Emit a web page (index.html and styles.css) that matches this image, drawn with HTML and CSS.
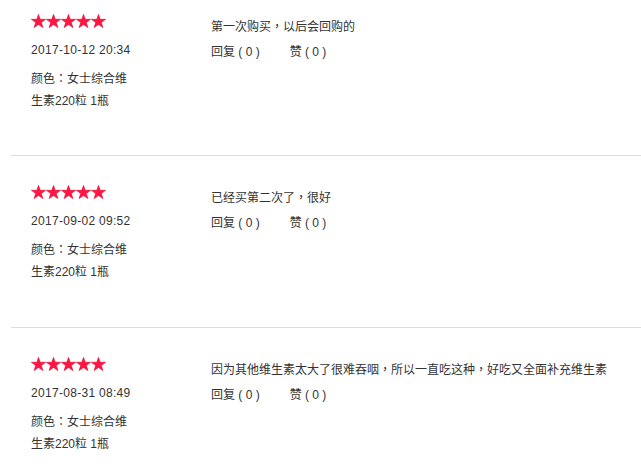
FILE: index.html
```html
<!DOCTYPE html>
<html lang="zh-CN">
<head>
<meta charset="utf-8">
<title>评价</title>
<link rel="stylesheet" href="styles.css">
</head>
<body>
<svg class="defs" width="0" height="0" aria-hidden="true">
  <defs>
    <symbol id="star" viewBox="0 0 15 14">
      <polygon points="7.5,0.4 9.2,5.3 14.6,5.3 10.3,8.5 11.9,13.6 7.5,10.5 3.1,13.6 4.7,8.5 0.4,5.3 5.8,5.3" fill="#ff1744" stroke="#e8002c" stroke-width="0.6" stroke-linejoin="round"/>
    </symbol>
  </defs>
</svg>
<div class="list">
  <div class="review">
    <div class="meta">
      <div class="stars">
        <svg class="star"><use href="#star"/></svg><svg class="star"><use href="#star"/></svg><svg class="star"><use href="#star"/></svg><svg class="star"><use href="#star"/></svg><svg class="star"><use href="#star"/></svg>
      </div>
      <div class="date">2017-10-12 20:34</div>
      <div class="spec">颜色<span class="punct" lang="zh-TW">：</span>女士综合维<br>生素220粒 1瓶</div>
    </div>
    <div class="body">
      <div class="text">第一次购买<span class="punct" lang="zh-TW">，</span>以后会回购的</div>
      <div class="actions"><span class="reply">回复 ( 0 )</span><span class="like">赞 ( 0 )</span></div>
    </div>
  </div>
  <div class="review">
    <div class="meta">
      <div class="stars">
        <svg class="star"><use href="#star"/></svg><svg class="star"><use href="#star"/></svg><svg class="star"><use href="#star"/></svg><svg class="star"><use href="#star"/></svg><svg class="star"><use href="#star"/></svg>
      </div>
      <div class="date">2017-09-02 09:52</div>
      <div class="spec">颜色<span class="punct" lang="zh-TW">：</span>女士综合维<br>生素220粒 1瓶</div>
    </div>
    <div class="body">
      <div class="text">已经买第二次了<span class="punct" lang="zh-TW">，</span>很好</div>
      <div class="actions"><span class="reply">回复 ( 0 )</span><span class="like">赞 ( 0 )</span></div>
    </div>
  </div>
  <div class="review">
    <div class="meta">
      <div class="stars">
        <svg class="star"><use href="#star"/></svg><svg class="star"><use href="#star"/></svg><svg class="star"><use href="#star"/></svg><svg class="star"><use href="#star"/></svg><svg class="star"><use href="#star"/></svg>
      </div>
      <div class="date">2017-08-31 08:49</div>
      <div class="spec">颜色<span class="punct" lang="zh-TW">：</span>女士综合维<br>生素220粒 1瓶</div>
    </div>
    <div class="body">
      <div class="text">因为其他维生素太大了很难吞咽<span class="punct" lang="zh-TW">，</span>所以一直吃这种<span class="punct" lang="zh-TW">，</span>好吃又全面补充维生素</div>
      <div class="actions"><span class="reply">回复 ( 0 )</span><span class="like">赞 ( 0 )</span></div>
    </div>
  </div>
</div>
</body>
</html>
```

FILE: styles.css
```css
html, body {
  margin: 0;
  padding: 0;
  background: #fff;
}
body {
  font-family: "Liberation Sans", "Noto Sans CJK SC", sans-serif;
  font-size: 12px;
  color: #333;
  overflow: hidden;
}
.defs {
  position: absolute;
  width: 0;
  height: 0;
}
.punct {
  font-family: "Noto Sans CJK TC", "Noto Sans CJK SC", sans-serif;
}
.list {
  margin-left: 11px;
}
.review {
  display: flex;
  padding: 29px 0 44px 20px;
  border-bottom: 1px solid #dcdcdc;
}
.review:first-child {
  padding-top: 14px;
  padding-bottom: 43px;
}
.meta {
  width: 180px;
  flex: none;
}
.stars {
  display: flex;
  height: 14px;
}
.star {
  width: 15px;
  height: 14px;
  display: block;
}
.date {
  margin-top: 12px;
  line-height: 21px;
  letter-spacing: 0.3px;
}
.spec {
  margin-top: 6px;
  line-height: 22px;
}
.body {
  flex: 1;
  padding-top: 1px;
}
.text {
  line-height: 22px;
}
.actions {
  margin-top: 3px;
  line-height: 22px;
  display: flex;
}
.reply {
  margin-right: 30px;
}
```
